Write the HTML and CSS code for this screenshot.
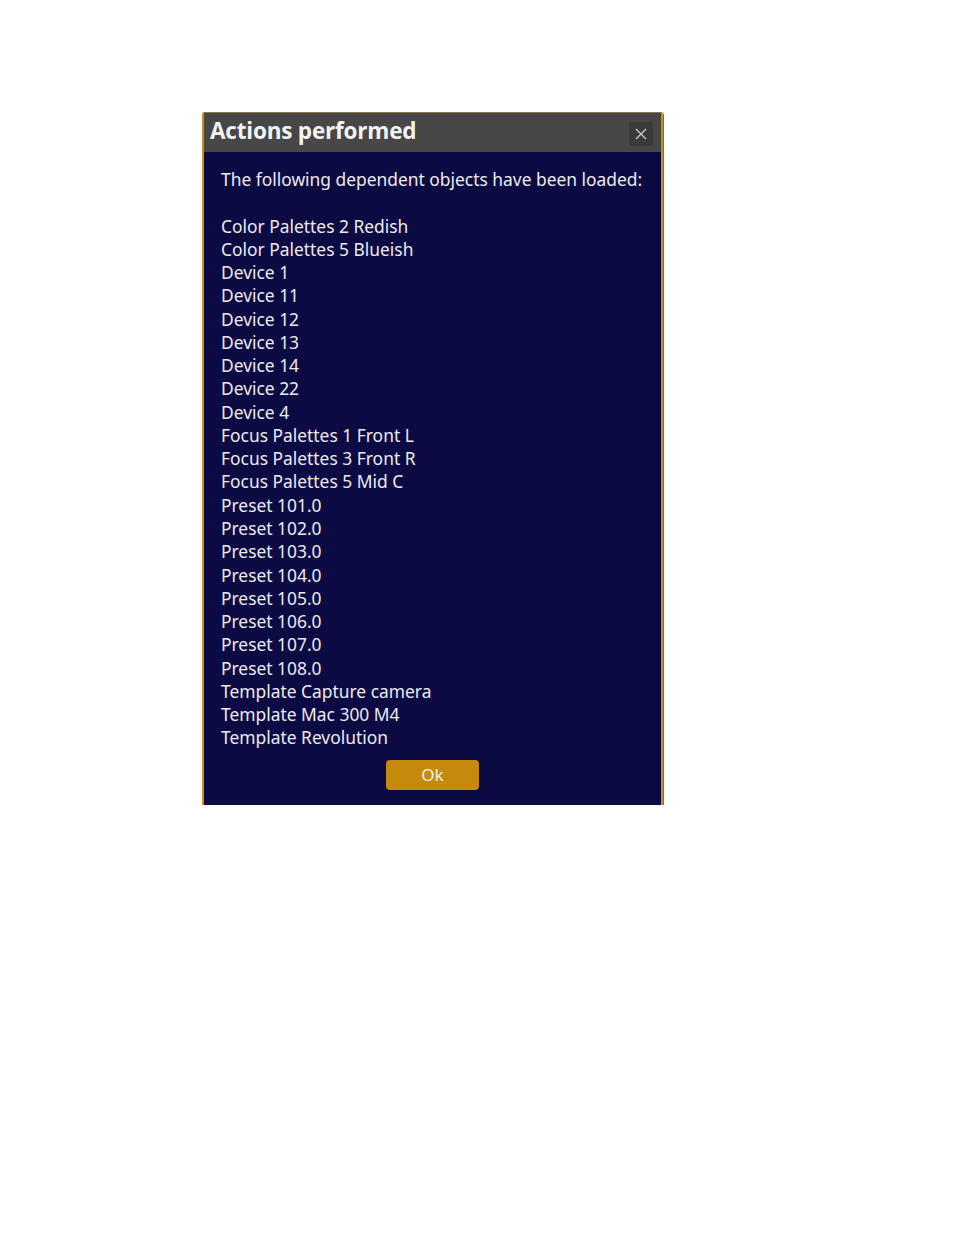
FILE: index.html
```html
<!DOCTYPE html>
<html>
<head>
<meta charset="utf-8">
<link rel="stylesheet" href="styles.css">
</head>
<body>
<div class="page">
  <div class="dialog">
    <div class="titlebar">
      <div class="title">Actions performed</div>
      <div class="close">
        <svg width="12" height="12" viewBox="0 0 12 12"><path d="M1 1 L11 11 M11 1 L1 11" stroke="#c8c8c8" stroke-width="1.4" fill="none"/></svg>
      </div>
    </div>
    <div class="content">
      <div class="intro">The following dependent objects have been loaded:</div>
      <ul class="list">
        <li>Color Palettes 2 Redish</li>
        <li>Color Palettes 5 Blueish</li>
        <li>Device 1</li>
        <li>Device 11</li>
        <li>Device 12</li>
        <li>Device 13</li>
        <li>Device 14</li>
        <li>Device 22</li>
        <li>Device 4</li>
        <li>Focus Palettes 1 Front L</li>
        <li>Focus Palettes 3 Front R</li>
        <li>Focus Palettes 5 Mid C</li>
        <li>Preset 101.0</li>
        <li>Preset 102.0</li>
        <li>Preset 103.0</li>
        <li>Preset 104.0</li>
        <li>Preset 105.0</li>
        <li>Preset 106.0</li>
        <li>Preset 107.0</li>
        <li>Preset 108.0</li>
        <li>Template Capture camera</li>
        <li>Template Mac 300 M4</li>
        <li>Template Revolution</li>
      </ul>
      <div class="actions"><button class="ok">Ok</button></div>
    </div>
  </div>
</div>
</body>
</html>
```

FILE: styles.css
```css
html, body {
  margin: 0;
  padding: 0;
  background: #ffffff;
}
.page {
  padding: 112px 0 0 202px;
}
.dialog {
  width: 457px;
  border-left: 2px solid #c8901a;
  border-right: 2px solid #c8901a;
  border-top: 1px solid #8a7a50;
  border-radius: 3px 4px 0 0;
  background: #0c0a42;
  box-shadow: 1px 0 0 #8a6a35;
  font-family: "Noto Sans", sans-serif;
  color: #ecebf2;
}
.titlebar {
  height: 39px;
  background: #474747;
  display: flex;
  align-items: center;
  justify-content: space-between;
  padding: 0 8px 0 6px;
  border-radius: 2px 3px 0 0;
}
.title {
  font-family: "Open Sans", sans-serif;
  font-weight: 700;
  font-size: 22.5px;
  color: #f4f4f4;
  letter-spacing: -0.2px;
  margin-top: -5px;
}
.close {
  width: 24px;
  height: 24px;
  background: #3a3a3a;
  border-radius: 3px;
  display: flex;
  align-items: center;
  justify-content: center;
  margin-top: 2px;
}
.content {
  padding: 16px 17px 15px 17px;
}
.intro {
  font-size: 17.4px;
  line-height: 23.27px;
}
.list {
  list-style: none;
  margin: 23.27px 0 0 0;
  padding: 0;
  font-size: 17.4px;
  line-height: 23.27px;
}
.actions {
  display: flex;
  justify-content: center;
  margin-top: 10px;
}
.ok {
  width: 93px;
  height: 30px;
  background: #c58a0b;
  border: none;
  border-radius: 4px;
  color: #f5f0e6;
  font-family: "Noto Sans", sans-serif;
  font-size: 17px;
  padding: 0;
}
```
